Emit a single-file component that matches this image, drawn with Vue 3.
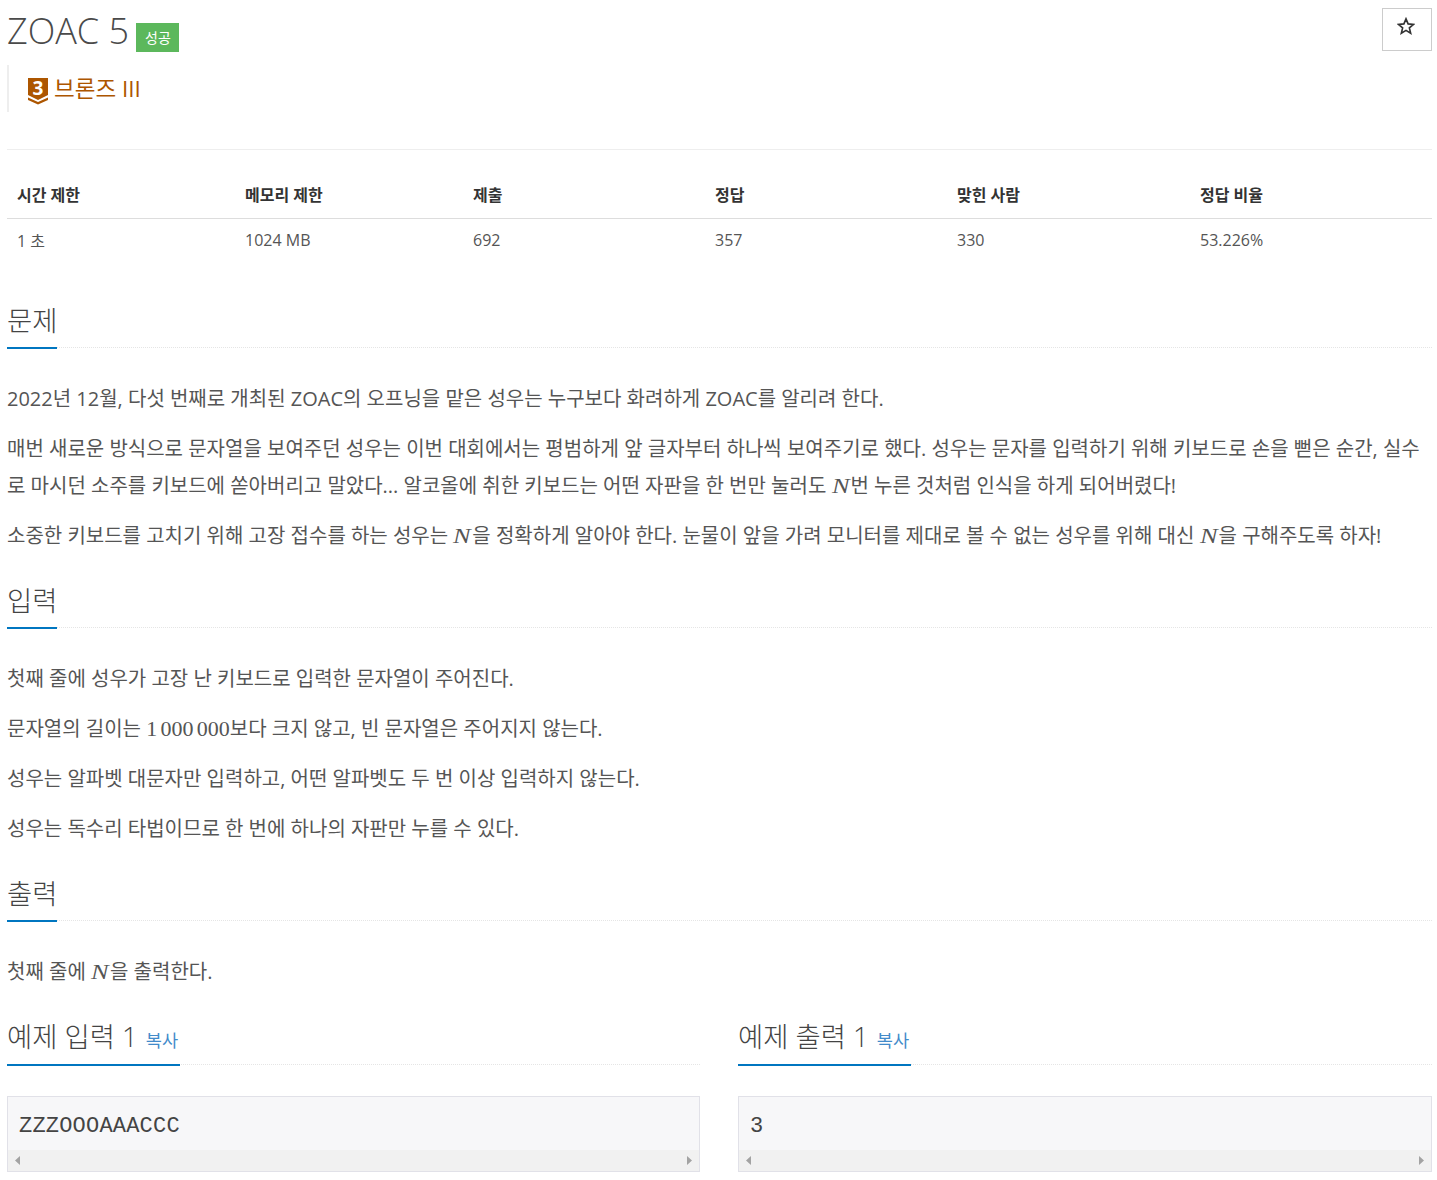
<script setup>
const stats = [
  { h: '시간 제한', v: '1 초', w: '228px' },
  { h: '메모리 제한', v: '1024 MB', w: '228px' },
  { h: '제출', v: '692', w: '242px' },
  { h: '정답', v: '357', w: '242px' },
  { h: '맞힌 사람', v: '330', w: '243px' },
  { h: '정답 비율', v: '53.226%', w: '242px' }
]
const samples = [
  { t: '예제 입력 1', v: 'ZZZOOOAAACCC' },
  { t: '예제 출력 1', v: '3' }
]
</script>

<template>
  <main class="page">
    <header class="title-row">
      <h1 class="title">ZOAC 5 <span class="label">성공</span></h1>
      <button class="star" type="button" aria-label="즐겨찾기">
        <svg width="18" height="18" viewBox="0 0 24 24"><polygon points="12,2.5 14.8,9.2 22,9.8 16.5,14.5 18.2,21.6 12,17.8 5.8,21.6 7.5,14.5 2,9.8 9.2,9.2" fill="none" stroke="#333" stroke-width="2.2" /></svg>
      </button>
    </header>
    <blockquote class="tier">
      <svg class="tier-icon" width="20" height="27" viewBox="0 0 20 27">
        <path d="M0 0H20V17L10 22L0 17Z" fill="#ad5600" />
        <path d="M0 19.5L10 24L20 19.5V22L10 26.5L0 22Z" fill="#ad5600" />
        <text x="10" y="16.5" text-anchor="middle" fill="#fff" font-size="19" font-weight="700" font-family="Open Sans, sans-serif">3</text>
      </svg>
      <span>브론즈 III</span>
    </blockquote>
    <hr class="rule" />

    <table class="stats">
      <thead>
        <tr><th v-for="s in stats" :key="s.h" :style="{ width: s.w }">{{ s.h }}</th></tr>
      </thead>
      <tbody>
        <tr><td v-for="s in stats" :key="s.h">{{ s.v }}</td></tr>
      </tbody>
    </table>

    <section class="sec first">
      <h2 class="head"><span class="head-in">문제</span></h2>
      <div class="body">
        <p>2022년 12월, 다섯 번째로 개최된 ZOAC의 오프닝을 맡은 성우는 누구보다 화려하게 ZOAC를 알리려 한다.</p>
        <p>매번 새로운 방식으로 문자열을 보여주던 성우는 이번 대회에서는 평범하게 앞 글자부터 하나씩 보여주기로 했다. 성우는 문자를 입력하기 위해 키보드로 손을 뻗은 순간, 실수로 마시던 소주를 키보드에 쏟아버리고 말았다... 알코올에 취한 키보드는 어떤 자판을 한 번만 눌러도 <i class="m">N</i>번 누른 것처럼 인식을 하게 되어버렸다!</p>
        <p>소중한 키보드를 고치기 위해 고장 접수를 하는 성우는 <i class="m">N</i>을 정확하게 알아야 한다. 눈물이 앞을 가려 모니터를 제대로 볼 수 없는 성우를 위해 대신 <i class="m">N</i>을 구해주도록 하자!</p>
      </div>
    </section>

    <section class="sec">
      <h2 class="head"><span class="head-in">입력</span></h2>
      <div class="body">
        <p>첫째 줄에 성우가 고장 난 키보드로 입력한 문자열이 주어진다.</p>
        <p>문자열의 길이는 <span class="mn">1 000 000</span>보다 크지 않고, 빈 문자열은 주어지지 않는다.</p>
        <p>성우는 알파벳 대문자만 입력하고, 어떤 알파벳도 두 번 이상 입력하지 않는다.</p>
        <p>성우는 독수리 타법이므로 한 번에 하나의 자판만 누를 수 있다.</p>
      </div>
    </section>

    <section class="sec">
      <h2 class="head"><span class="head-in">출력</span></h2>
      <div class="body">
        <p>첫째 줄에 <i class="m">N</i>을 출력한다.</p>
      </div>
    </section>

    <div class="samples">
      <section v-for="s in samples" :key="s.t" class="sample">
        <h2 class="head"><span class="head-in">{{ s.t }} <a class="copy">복사</a></span></h2>
        <div class="pre">
          <div class="pre-text">{{ s.v }}</div>
          <div class="scroll">
            <svg width="7" height="9" viewBox="0 0 7 9"><polygon points="6,0 6,9 1,4.5" fill="#a3a3a3" /></svg>
            <svg width="7" height="9" viewBox="0 0 7 9"><polygon points="1,0 1,9 6,4.5" fill="#a3a3a3" /></svg>
          </div>
        </div>
      </section>
    </div>
  </main>
</template>

<style>
body { margin: 0; background: #fff; }
</style>

<style scoped>
.page {
  box-sizing: border-box;
  width: 1437px;
  height: 1180px;
  overflow: hidden;
  padding: 0 5px 0 7px;
  font-family: "Open Sans", "Noto Sans CJK KR", sans-serif;
  color: #333;
}
.title-row { display: flex; justify-content: space-between; height: 65px; }
.title { margin: 8px 0 0; font-size: 36px; line-height: 46px; font-weight: 300; color: #4a4a4a; height: 46px; white-space: nowrap; }
.label {
  display: inline-block; vertical-align: 1px; box-sizing: border-box; width: 43px; height: 29px;
  background: #5cb85c; color: #fff; font-size: 14px; font-weight: 400; line-height: 29px; text-align: center; margin-left: -2px;
}
.star {
  box-sizing: border-box; width: 50px; height: 43px; margin-top: 8px; padding: 0 2px 7px 0; background: #fff;
  border: 1px solid #ccc; display: flex; align-items: center; justify-content: center;
}
.tier {
  box-sizing: border-box; margin: 0; height: 47px; border-left: 2px solid #eee; padding-left: 19px;
  display: flex; align-items: center; gap: 6px; font-size: 22.5px; color: #ad5600;
}
.tier span { margin-top: -3px; }
.tier-icon { margin-top: 5px; overflow: visible; }
.rule { border: 0; border-top: 1px solid #eee; margin: 37px 0 0; }
.stats { width: 1425px; border-collapse: collapse; table-layout: fixed; margin-top: 22px; font-size: 16px; }
.stats th { text-align: left; padding: 0 10px 2px; height: 46px; box-sizing: border-box; border-bottom: 1px solid #ddd; font-weight: 700; font-size: 16px; color: #333; }
.stats td { padding: 0 10px; height: 43px; box-sizing: border-box; color: #555; vertical-align: middle; }
.sec.first { margin-top: 37px; }
.sec { margin-bottom: 24px; }
.head { margin: 0; border-bottom: 1px dotted #e5e5e5; font-size: 27.4px; font-weight: 300; line-height: 46px; color: #444; height: 49px; }
.head-in { display: inline-block; vertical-align: top; height: 49px; border-bottom: 2px solid #0076c0; white-space: nowrap; }
.sample .head-in { padding-right: 2px; line-height: 44px; }
.body { padding-top: 32px; font-size: 20px; line-height: 37px; color: #555; }
.body p { margin: 0 0 13px; }
.m {
  display: inline-block; width: 15.8px; margin-right: 3.2px; transform: scaleX(1.2); transform-origin: left center;
  font-family: "Liberation Serif", serif; font-style: italic; font-size: 22px; line-height: 1;
}
.mn { font-family: "Liberation Serif", serif; font-size: 22px; line-height: 1; word-spacing: -2.2px; }
.samples { display: grid; grid-template-columns: 693px 694px; column-gap: 38px; margin-top: 25px; }
.copy { font-size: 17.6px; font-weight: 400; color: #428bca; margin-left: 1px; }
.pre { box-sizing: border-box; margin-top: 31px; height: 76px; border: 1px solid #e1e1e8; background: #f7f7f9; display: flex; flex-direction: column; }
.pre-text { flex: 1; padding: 6px 11px 0; line-height: 47px; font-family: "Liberation Mono", monospace; font-size: 22px; color: #444; letter-spacing: .2px; }
.scroll { flex: none; height: 21px; background: #f1f1f1; display: flex; justify-content: space-between; align-items: center; padding: 0 6px; }
</style>
